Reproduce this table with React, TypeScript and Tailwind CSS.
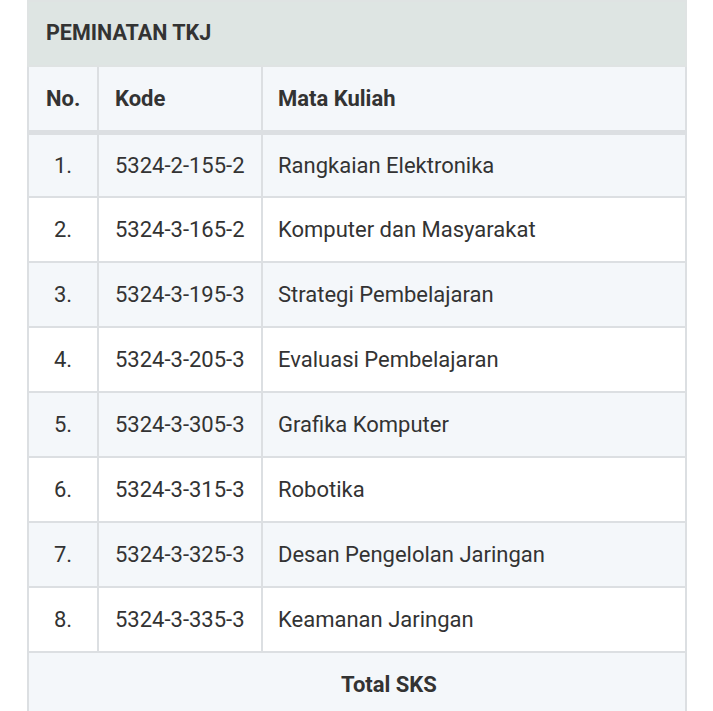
const courses = [
  { no: "1.", kode: "5324-2-155-2", nama: "Rangkaian Elektronika" },
  { no: "2.", kode: "5324-3-165-2", nama: "Komputer dan Masyarakat" },
  { no: "3.", kode: "5324-3-195-3", nama: "Strategi Pembelajaran" },
  { no: "4.", kode: "5324-3-205-3", nama: "Evaluasi Pembelajaran" },
  { no: "5.", kode: "5324-3-305-3", nama: "Grafika Komputer" },
  { no: "6.", kode: "5324-3-315-3", nama: "Robotika" },
  { no: "7.", kode: "5324-3-325-3", nama: "Desan Pengelolan Jaringan" },
  { no: "8.", kode: "5324-3-335-3", nama: "Keamanan Jaringan" },
];

export default function App() {
  return (
    <div className="min-h-screen bg-white pl-[27px] font-['Roboto',sans-serif] text-[#333]">
      <table className="w-[660px] border-collapse text-[22px]">
        <thead>
          <tr>
            <th
              colSpan={3}
              className="h-[65px] border-2 border-[#dfe3e3] bg-[#dee5e3] pl-[17px] text-left text-[21.5px] font-bold"
            >
              PEMINATAN TKJ
            </th>
          </tr>
          <tr className="bg-[#f4f7fa]">
            <th className="h-[66px] w-[70px] border-2 border-b-[5px] border-[#dcdfe2] pl-[17px] text-left font-bold">
              No.
            </th>
            <th className="w-[164px] border-2 border-b-[5px] border-[#dcdfe2] pl-[16px] text-left font-bold">
              Kode
            </th>
            <th className="border-2 border-b-[5px] border-[#dcdfe2] pl-[15px] text-left font-bold">
              Mata Kuliah
            </th>
          </tr>
        </thead>
        <tbody>
          {courses.map((c, i) => (
            <tr key={c.no} className={i % 2 === 0 ? "bg-[#f4f7fa]" : "bg-white"}>
              <td className="h-[65px] border-2 border-[#dcdfe2] text-center">{c.no}</td>
              <td className="border-2 border-[#dcdfe2] pl-[16px]">{c.kode}</td>
              <td className="border-2 border-[#dcdfe2] pl-[15px]">{c.nama}</td>
            </tr>
          ))}
          <tr className="bg-[#f4f7fa]">
            <td colSpan={3} className="h-[65px] border-2 border-[#dcdfe2] pl-[64px] text-center font-bold">
              Total SKS
            </td>
          </tr>
        </tbody>
      </table>
    </div>
  );
}
